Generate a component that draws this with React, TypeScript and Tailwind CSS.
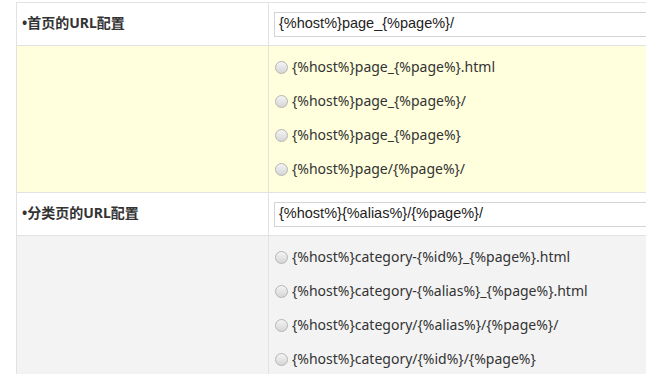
import React from "react";

const Radio = () => (
  <span className="inline-block w-[13px] h-[13px] rounded-full border border-[#b5b5b5] bg-gradient-to-b from-[#f4f4f4] to-[#d6d6d6] shrink-0" />
);

const Option = ({ text }: { text: string }) => (
  <div className="h-[34px] flex items-center gap-[4px] pl-[6px]">
    <Radio />
    <span className="text-[14px] leading-[16px] pb-[1px] text-[#333]">{text}</span>
  </div>
);

const LabelRow = ({ label, value }: { label: string; value: string }) => (
  <div className="flex h-[43px] border-b border-[#e2e2e2] bg-white">
    <div className="w-[252px] border-r border-[#e2e2e2] flex items-center pl-[5px] pb-[3px] text-[14px] font-bold text-[#333]">
      •{label}
    </div>
    <div className="flex-1 flex items-center pl-[5px]">
      <div
        className="h-[25px] w-[420px] border border-[#d4d4d4] flex items-center pl-[4px] text-[14.5px] text-[#222]"
        style={{ fontFamily: '"Liberation Sans", Arial, sans-serif' }}
      >
        {value}
      </div>
    </div>
  </div>
);

const OptionsRow = ({ bg, items }: { bg: string; items: string[] }) => (
  <div className={`flex border-b border-[#e2e2e2] ${bg}`}>
    <div className="w-[252px] border-r border-[#e2e2e2]" />
    <div className="flex-1 pt-[4px] pb-[6px]">
      {items.map((t) => (
        <Option key={t} text={t} />
      ))}
    </div>
  </div>
);

export default function App() {
  return (
    <div
      className="w-[646px] h-[374px] overflow-hidden bg-white pl-[16px] pt-[2px]"
      style={{ fontFamily: '"Noto Sans", "Noto Sans CJK SC", sans-serif' }}
    >
      <div className="w-[700px] border-l border-t border-[#e2e2e2]">
        <LabelRow label="首页的URL配置" value="{%host%}page_{%page%}/" />
        <OptionsRow
          bg="bg-[#ffffdd]"
          items={[
            "{%host%}page_{%page%}.html",
            "{%host%}page_{%page%}/",
            "{%host%}page_{%page%}",
            "{%host%}page/{%page%}/",
          ]}
        />
        <LabelRow label="分类页的URL配置" value="{%host%}{%alias%}/{%page%}/" />
        <OptionsRow
          bg="bg-[#f3f3f3]"
          items={[
            "{%host%}category-{%id%}_{%page%}.html",
            "{%host%}category-{%alias%}_{%page%}.html",
            "{%host%}category/{%alias%}/{%page%}/",
            "{%host%}category/{%id%}/{%page%}",
          ]}
        />
      </div>
    </div>
  );
}
